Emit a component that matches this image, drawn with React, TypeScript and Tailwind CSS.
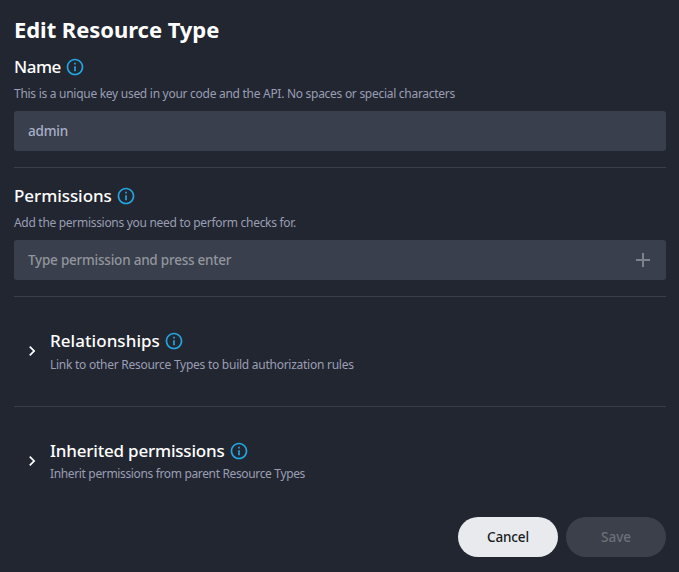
import { MdAdd, MdChevronRight, MdInfoOutline } from "react-icons/md";

function Heading({ text, tracking }: { text: string; tracking: string }) {
  return (
    <div className="flex h-6 items-center gap-1">
      <h2 className={`whitespace-nowrap text-[17px] leading-6 font-medium text-white ${tracking}`}>{text}</h2>
      <MdInfoOutline className="size-5 shrink-0 text-[#23a7e4]" />
    </div>
  );
}

function Hint({ text, tracking }: { text: string; tracking: string }) {
  return <p className={`whitespace-nowrap text-[12px] leading-4 text-[#9a9eb5] ${tracking}`}>{text}</p>;
}

function Expandable({ title, titleTracking, hint, hintTracking, gap }: { title: string; titleTracking: string; hint: string; hintTracking: string; gap: string }) {
  return (
    <section className="flex h-[109px] items-center pb-[2px] pl-2">
      <MdChevronRight className="mr-2 size-5 shrink-0 text-white" />
      <div className={`flex flex-col ${gap}`}>
        <Heading text={title} tracking={titleTracking} />
        <Hint text={hint} tracking={hintTracking} />
      </div>
    </section>
  );
}

export default function App() {
  return (
    <main className="h-[572px] w-[679px] overflow-hidden bg-[#222630] pr-[13px] pl-[14px] font-['Noto_Sans',sans-serif]">
      <h1 className="pt-[13px] pb-px text-[22px] leading-8 font-bold tracking-[-0.05px] whitespace-nowrap text-white">Edit Resource Type</h1>
      <section className="flex h-[122px] flex-col border-b border-[#383e4b] pt-[9px]">
        <Heading text="Name" tracking="tracking-[-0.5px]" />
        <div className="pt-[7px] pb-[9px]"><Hint text="This is a unique key used in your code and the API. No spaces or special characters" tracking="tracking-[-0.28px]" /></div>
        <input readOnly value="admin" className="h-10 w-full shrink-0 rounded-[3px] bg-[#393f4d] px-[14px] text-[13.5px] font-medium tracking-[-0.2px] text-[#a8b0c8] outline-none" />
      </section>
      <section className="flex h-[129px] flex-col border-b border-[#383e4b] pt-4">
        <Heading text="Permissions" tracking="tracking-[-0.06px]" />
        <div className="pt-[7px] pb-[9px]"><Hint text="Add the permissions you need to perform checks for." tracking="tracking-[-0.3px]" /></div>
        <div className="flex h-10 shrink-0 items-center rounded-[3px] bg-[#393f4d] pr-[11px] pl-[14px]">
          <input placeholder="Type permission and press enter" className="min-w-0 flex-1 bg-transparent text-[13.5px] font-medium tracking-[-0.23px] outline-none placeholder:text-[#92969c]" />
          <MdAdd className="size-6 text-[#7c818b]" />
        </div>
      </section>
      <div className="border-b border-[#383e4b]">
        <Expandable title="Relationships" titleTracking="tracking-[0.05px]" hint="Link to other Resource Types to build authorization rules" hintTracking="tracking-[-0.26px]" gap="gap-1" />
      </div>
      <Expandable title="Inherited permissions" titleTracking="tracking-[-0.2px]" hint="Inherit permissions from parent Resource Types" hintTracking="tracking-[-0.35px]" gap="gap-[3px]" />
      <footer className="flex justify-end gap-2 pt-px">
        <button className="h-10 w-[100px] rounded-full bg-[#e9eaee] text-[13.5px] font-medium tracking-[-0.15px] text-[#181b20]">Cancel</button>
        <button disabled className="h-10 w-[100px] rounded-full bg-[#3c404a] text-[13.5px] font-medium text-[#6c7079]">Save</button>
      </footer>
    </main>
  );
}
